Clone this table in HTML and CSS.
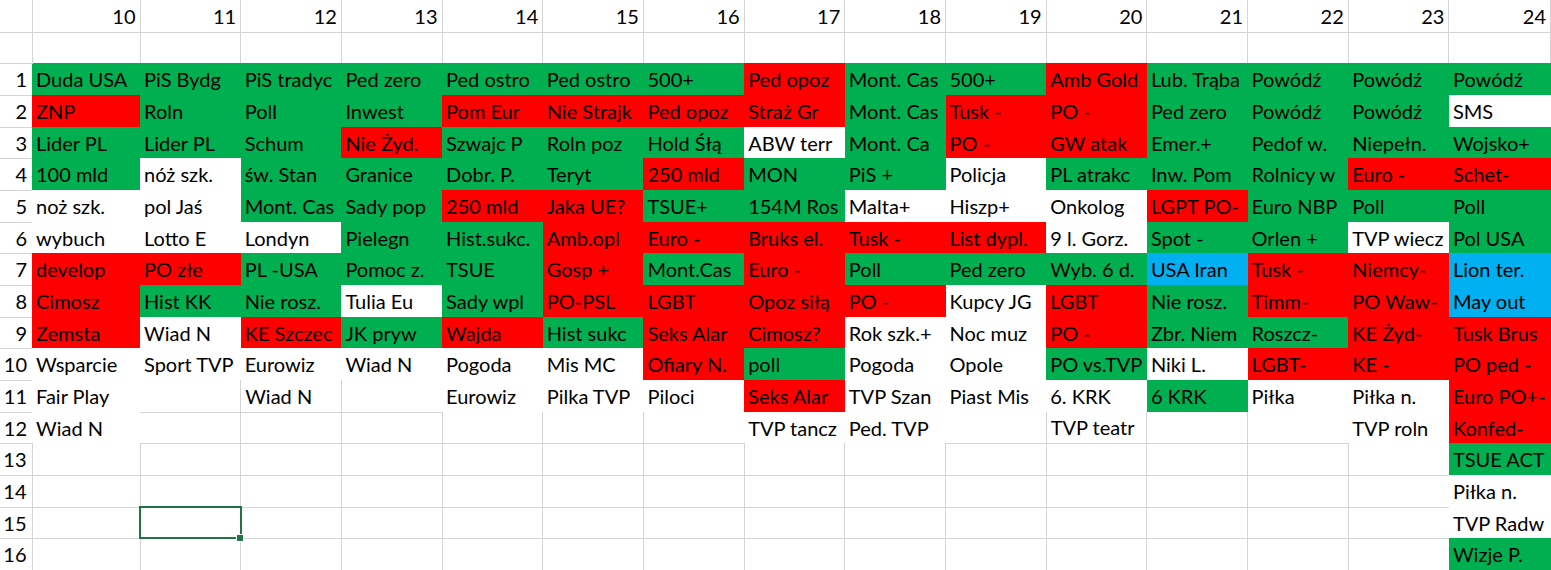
FILE: index.html
```html
<!DOCTYPE html>
<html lang="pl">
<head>
<meta charset="utf-8">
<title>Arkusz</title>
<link rel="stylesheet" href="styles.css">
</head>
<body>
<table class="sheet">
<colgroup>
<col class="c-rn"><col class="c-first"><col class="c"><col class="c"><col class="c"><col class="c"><col class="c"><col class="c"><col class="c"><col class="c"><col class="c"><col class="c"><col class="c"><col class="c"><col class="c"><col class="c-last">
</colgroup>
<tr class="top">
<td class="rn"></td><td class="num">10</td><td class="num">11</td><td class="num">12</td><td class="num">13</td><td class="num">14</td><td class="num">15</td><td class="num">16</td><td class="num">17</td><td class="num">18</td><td class="num">19</td><td class="num">20</td><td class="num">21</td><td class="num">22</td><td class="num">23</td><td class="num">24</td>
</tr>
<tr class="s">
<td class="rn"></td><td></td><td></td><td></td><td></td><td></td><td></td><td></td><td></td><td></td><td></td><td></td><td></td><td></td><td></td><td></td>
</tr>
<tr>
<td class="rn">1</td><td class="g">Duda USA</td><td class="g">PiS Bydg</td><td class="g">PiS tradyc</td><td class="g">Ped zero</td><td class="g">Ped ostro</td><td class="g">Ped ostro</td><td class="g">500+</td><td class="r">Ped opoz</td><td class="g">Mont. Cas</td><td class="g">500+</td><td class="r">Amb Gold</td><td class="g">Lub. Trąba</td><td class="g">Powódź</td><td class="g">Powódź</td><td class="g">Powódź</td>
</tr>
<tr>
<td class="rn">2</td><td class="r">ZNP</td><td class="g">Roln</td><td class="g">Poll</td><td class="g">Inwest</td><td class="r">Pom Eur</td><td class="r">Nie Strajk</td><td class="r">Ped opoz</td><td class="r">Straż Gr</td><td class="g">Mont. Cas</td><td class="r">Tusk -</td><td class="r">PO -</td><td class="g">Ped zero</td><td class="g">Powódź</td><td class="g">Powódź</td><td class="w">SMS</td>
</tr>
<tr class="s">
<td class="rn">3</td><td class="g">Lider PL</td><td class="g">Lider PL</td><td class="g">Schum</td><td class="r">Nie Żyd.</td><td class="g">Szwajc P</td><td class="g">Roln poz</td><td class="g">Hold Śłą</td><td class="w">ABW terr</td><td class="g">Mont. Ca</td><td class="r">PO -</td><td class="r">GW atak</td><td class="g">Emer.+</td><td class="g">Pedof w.</td><td class="g">Niepełn.</td><td class="g">Wojsko+</td>
</tr>
<tr>
<td class="rn">4</td><td class="g">100 mld</td><td class="w">nóż szk.</td><td class="g">św. Stan</td><td class="g">Granice</td><td class="g">Dobr. P.</td><td class="g">Teryt</td><td class="r">250 mld</td><td class="g">MON</td><td class="g">PiS +</td><td class="w">Policja</td><td class="g">PL atrakc</td><td class="g">Inw. Pom</td><td class="g">Rolnicy w</td><td class="r">Euro -</td><td class="r">Schet-</td>
</tr>
<tr>
<td class="rn">5</td><td class="w">noż szk.</td><td class="w">pol Jaś</td><td class="g">Mont. Cas</td><td class="g">Sady pop</td><td class="r">250 mld</td><td class="r">Jaka UE?</td><td class="g">TSUE+</td><td class="g">154M Ros</td><td class="w">Malta+</td><td class="w">Hiszp+</td><td class="w">Onkolog</td><td class="r">LGPT PO-</td><td class="g">Euro NBP</td><td class="g">Poll</td><td class="g">Poll</td>
</tr>
<tr class="s">
<td class="rn">6</td><td class="w">wybuch</td><td class="w">Lotto E</td><td class="w">Londyn</td><td class="g">Pielegn</td><td class="g">Hist.sukc.</td><td class="r">Amb.opl</td><td class="r">Euro -</td><td class="r">Bruks el.</td><td class="r">Tusk -</td><td class="r">List dypl.</td><td class="w">9 l. Gorz.</td><td class="g">Spot -</td><td class="g">Orlen +</td><td class="w">TVP wiecz</td><td class="g">Pol USA</td>
</tr>
<tr>
<td class="rn">7</td><td class="r">develop</td><td class="r">PO złe</td><td class="g">PL -USA</td><td class="g">Pomoc z.</td><td class="g">TSUE</td><td class="r">Gosp +</td><td class="g">Mont.Cas</td><td class="r">Euro -</td><td class="g">Poll</td><td class="g">Ped zero</td><td class="g">Wyb. 6 d.</td><td class="b">USA Iran</td><td class="r">Tusk -</td><td class="r">Niemcy-</td><td class="b">Lion ter.</td>
</tr>
<tr>
<td class="rn">8</td><td class="r">Cimosz</td><td class="g">Hist KK</td><td class="g">Nie rosz.</td><td class="w">Tulia Eu</td><td class="g">Sady wpl</td><td class="r">PO-PSL</td><td class="r">LGBT</td><td class="r">Opoz siłą</td><td class="r">PO -</td><td class="w">Kupcy JG</td><td class="r">LGBT</td><td class="g">Nie rosz.</td><td class="r">Timm-</td><td class="r">PO Waw-</td><td class="b">May out</td>
</tr>
<tr class="s">
<td class="rn">9</td><td class="r">Zemsta</td><td class="w">Wiad N</td><td class="r">KE Szczec</td><td class="g">JK pryw</td><td class="r">Wajda</td><td class="g">Hist sukc</td><td class="r">Seks Alar</td><td class="r">Cimosz?</td><td class="w">Rok szk.+</td><td class="w">Noc muz</td><td class="r">PO -</td><td class="g">Zbr. Niem</td><td class="g">Roszcz-</td><td class="r">KE Żyd-</td><td class="r">Tusk Brus</td>
</tr>
<tr>
<td class="rn">10</td><td class="w">Wsparcie</td><td class="w">Sport TVP</td><td class="w">Eurowiz</td><td class="w">Wiad N</td><td class="w">Pogoda</td><td class="w">Mis MC</td><td class="r">Ofiary N.</td><td class="g">poll</td><td class="w">Pogoda</td><td class="w">Opole</td><td class="g">PO vs.TVP</td><td class="w">Niki L.</td><td class="r">LGBT-</td><td class="r">KE -</td><td class="r">PO ped -</td>
</tr>
<tr>
<td class="rn">11</td><td class="w">Fair Play</td><td></td><td>Wiad N</td><td></td><td class="w">Eurowiz</td><td class="w">Pilka TVP</td><td class="w">Piloci</td><td class="r">Seks Alar</td><td class="w">TVP Szan</td><td class="w">Piast Mis</td><td class="w">6. KRK</td><td class="g">6 KRK</td><td class="w">Piłka</td><td class="w">Piłka n.</td><td class="r">Euro PO+-</td>
</tr>
<tr class="s">
<td class="rn">12</td><td class="w">Wiad N</td><td></td><td></td><td></td><td></td><td></td><td></td><td class="w">TVP tancz</td><td class="w">Ped. TVP</td><td></td><td>TVP teatr</td><td></td><td></td><td class="w">TVP roln</td><td class="r">Konfed-</td>
</tr>
<tr>
<td class="rn">13</td><td></td><td></td><td></td><td></td><td></td><td></td><td></td><td></td><td></td><td></td><td></td><td></td><td></td><td></td><td class="g">TSUE ACT</td>
</tr>
<tr>
<td class="rn">14</td><td></td><td></td><td></td><td></td><td></td><td></td><td></td><td></td><td></td><td></td><td></td><td></td><td></td><td></td><td class="w">Piłka n.</td>
</tr>
<tr class="s">
<td class="rn">15</td><td></td><td class="sel"></td><td></td><td></td><td></td><td></td><td></td><td></td><td></td><td></td><td></td><td></td><td></td><td></td><td class="w">TVP Radw</td>
</tr>
<tr>
<td class="rn">16</td><td></td><td></td><td></td><td></td><td></td><td></td><td></td><td></td><td></td><td></td><td></td><td></td><td></td><td></td><td class="g">Wizje P.</td>
</tr>
</table>
</body>
</html>
```

FILE: styles.css
```css
html, body {
  margin: 0;
  padding: 0;
  background: #ffffff;
}

body {
  font-family: Lato, "Noto Sans", sans-serif;
  font-size: 20px;
  color: #000000;
  overflow: hidden;
}

.sheet {
  border-collapse: collapse;
  table-layout: fixed;
  width: 1551px;
}

.c-rn { width: 32px; }
.c-first { width: 108px; }
.c { width: 100.7px; }

.sheet tr {
  height: 32px;
}

.sheet tr.s {
  height: 31px;
}

.sheet td {
  padding: 0 3px 0 4px;
  border: 1px solid #d4d4d4;
  white-space: nowrap;
  overflow: hidden;
  line-height: 28px;
  vertical-align: middle;
  text-align: left;
}

.sheet .top td {
  border-top: none;
}

.sheet td.rn {
  border-left: none;
  text-align: right;
  padding: 0 5px 0 0;
}

.sheet td.num {
  text-align: right;
  padding: 0 4px 0 0;
}

.sheet td.g,
.sheet td.r,
.sheet td.b,
.sheet td.w {
  border-style: hidden;
}

.g { background: #00b050; }
.r { background: #ff0000; }
.b { background: #00b0f0; }
.w { background: #ffffff; }

.sheet td.sel {
  position: relative;
  overflow: visible;
  outline: 2px solid #217346;
  outline-offset: -1px;
}

.sheet td.sel::after {
  content: "";
  position: absolute;
  right: -4px;
  bottom: -4px;
  width: 6px;
  height: 6px;
  background: #217346;
  border: 1px solid #ffffff;
}
```
